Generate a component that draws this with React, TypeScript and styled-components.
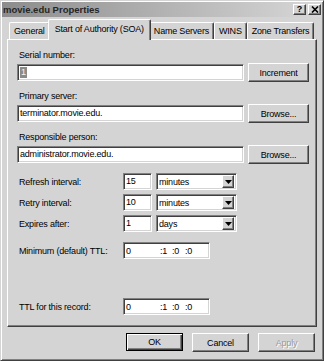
import React from "react";
import styled, { createGlobalStyle } from "styled-components";

const face = "#d4d4d4";
const shadow = "#808080";
const darkShadow = "#404040";
const highlight = "#ffffff";

const GlobalStyle = createGlobalStyle`
  html, body {
    margin: 0;
    padding: 0;
    background: ${face};
  }
  body {
    font-family: "Liberation Sans", Arial, sans-serif;
    font-size: 9px;
    letter-spacing: -0.2px;
    color: #000;
  }
  * {
    box-sizing: border-box;
  }
`;

const Window = styled.div`
  width: 324px;
  height: 361px;
  display: flex;
  flex-direction: column;
  background: ${face};
  border-top: 1px solid ${face};
  border-left: 1px solid ${face};
  border-right: 1px solid ${darkShadow};
  border-bottom: 1px solid ${darkShadow};
  box-shadow: inset 1px 1px ${highlight}, inset -1px -1px ${shadow};
  padding: 1px;
`;

const TitleBar = styled.div`
  height: 15px;
  display: flex;
  align-items: center;
  justify-content: space-between;
  padding: 0 1px 0 1px;
  background: linear-gradient(to right, #8c8c8c, #d8d8d8);
`;

const Title = styled.div`
  font-weight: bold;
  font-size: 9.5px;
  letter-spacing: 0;
  color: #262626;
`;

const CaptionButtons = styled.div`
  display: flex;
  gap: 2px;
`;

const CaptionButton = styled.div`
  width: 13px;
  height: 11px;
  display: flex;
  align-items: center;
  justify-content: center;
  background: ${face};
  border-top: 1px solid ${highlight};
  border-left: 1px solid ${highlight};
  border-right: 1px solid ${darkShadow};
  border-bottom: 1px solid ${darkShadow};
  box-shadow: inset -1px -1px ${shadow};
  font-weight: bold;
  font-size: 9px;
  line-height: 9px;
  letter-spacing: 0;
`;

const Body = styled.div`
  flex: 1;
  display: flex;
  flex-direction: column;
  padding: 0 5px 0 5px;
`;

const TabStrip = styled.div`
  height: 22px;
  display: flex;
  align-items: flex-end;
  padding-left: 2px;
`;

const Tab = styled.div<{ $active?: boolean }>`
  position: relative;
  z-index: ${(p) => (p.$active ? 2 : 1)};
  height: ${(p) => (p.$active ? "21px" : "17px")};
  margin: ${(p) => (p.$active ? "0 -2px -1px" : "0")};
  padding: ${(p) => (p.$active ? "0 6px 2px" : "0 4px")};
  display: flex;
  align-items: center;
  background: ${face};
  border-top: 1px solid ${highlight};
  border-left: 1px solid ${highlight};
  border-right: 1px solid ${darkShadow};
  border-radius: 2px 2px 0 0;
  box-shadow: inset -1px 0 ${shadow};
  white-space: nowrap;
`;

const Panel = styled.div`
  flex: 1;
  display: flex;
  flex-direction: column;
  padding: 10px 7px 11px 9px;
  border-top: 1px solid ${highlight};
  border-left: 1px solid ${highlight};
  border-right: 1px solid ${darkShadow};
  border-bottom: 1px solid ${darkShadow};
  box-shadow: inset -1px -1px ${shadow};
`;

const Group = styled.div`
  margin-bottom: 9px;
`;

const FieldLabel = styled.div`
  height: 11px;
  line-height: 11px;
  padding-left: 2px;
  margin-bottom: 2px;
`;

const FieldRow = styled.div`
  height: 19px;
  display: flex;
  align-items: center;
  gap: 4px;
`;

const Sunken = styled.div`
  height: 17px;
  background: #fff;
  border-top: 1px solid ${shadow};
  border-left: 1px solid ${shadow};
  border-right: 1px solid ${highlight};
  border-bottom: 1px solid ${highlight};
  box-shadow: inset 1px 1px ${darkShadow}, inset -1px -1px ${face};
  white-space: nowrap;
  overflow: hidden;
`;

const TextField = styled(Sunken)<{ $width?: number }>`
  flex: ${(p) => (p.$width ? "none" : "1")};
  width: ${(p) => (p.$width ? `${p.$width}px` : "auto")};
  padding: 0 2px;
  line-height: 15px;
`;

const Selected = styled.span`
  display: inline-block;
  background: #8a8a8a;
  color: #f4f4f4;
  padding: 0 1px;
  line-height: 11px;
  vertical-align: middle;
`;

const PushButton = styled.div<{ $width?: number; $default?: boolean; $disabled?: boolean }>`
  width: ${(p) => p.$width ?? 61}px;
  height: ${(p) => (p.$default ? 18 : 19)}px;
  display: flex;
  align-items: center;
  justify-content: center;
  background: ${face};
  border: 1px solid ${(p) => (p.$default ? "#000" : "transparent")};
  border-top-color: ${(p) => (p.$default ? "#000" : highlight)};
  border-left-color: ${(p) => (p.$default ? "#000" : highlight)};
  border-right-color: ${(p) => (p.$default ? "#000" : darkShadow)};
  border-bottom-color: ${(p) => (p.$default ? "#000" : darkShadow)};
  box-shadow: ${(p) =>
    p.$default
      ? `inset 1px 1px ${highlight}, inset -1px -1px ${darkShadow}, inset -2px -2px ${shadow}`
      : `inset -1px -1px ${shadow}`};
  color: ${(p) => (p.$disabled ? "#9a9a9a" : "#000")};
  text-shadow: ${(p) => (p.$disabled ? `1px 1px ${highlight}` : "none")};
`;

const IntervalRow = styled.div`
  height: 17px;
  display: flex;
  align-items: center;
  margin-bottom: 4px;
`;

const RowLabel = styled.div`
  width: 106px;
  padding-left: 2px;
`;

const SelectBox = styled(Sunken)`
  width: 81px;
  margin-left: 4px;
  display: flex;
  align-items: center;
  padding: 0 2px 0 2px;
`;

const SelectText = styled.div`
  flex: 1;
`;

const SelectArrow = styled.div`
  width: 12px;
  height: 13px;
  display: flex;
  align-items: center;
  justify-content: center;
  background: ${face};
  border-top: 1px solid ${highlight};
  border-left: 1px solid ${highlight};
  border-right: 1px solid ${darkShadow};
  border-bottom: 1px solid ${darkShadow};
  box-shadow: inset -1px -1px ${shadow};
`;

const TtlRow = styled.div<{ $top?: number }>`
  height: 17px;
  display: flex;
  align-items: center;
  margin-top: ${(p) => p.$top ?? 0}px;
`;

const TtlField = styled(Sunken)`
  width: 87px;
  display: flex;
  align-items: center;
  padding: 0 2px;
`;

const TtlPart = styled.span<{ $w: number }>`
  width: ${(p) => p.$w}px;
`;

const Spacer = styled.div`
  flex: 1;
`;

const Footer = styled.div`
  display: flex;
  justify-content: flex-end;
  gap: 9px;
  padding: 6px 7px 7px 0;
`;

const intervals = [
  { label: "Refresh interval:", value: "15", unit: "minutes" },
  { label: "Retry interval:", value: "10", unit: "minutes" },
  { label: "Expires after:", value: "1", unit: "days" },
];

const tabs = ["General", "Start of Authority (SOA)", "Name Servers", "WINS", "Zone Transfers"];

const DownArrow = () => (
  <svg width="7" height="4" viewBox="0 0 7 4">
    <path d="M0 0h7L3.5 4z" fill="#000" />
  </svg>
);

const CloseGlyph = () => (
  <svg width="8" height="7" viewBox="0 0 8 7">
    <path d="M1 0.5l6 6M7 0.5l-6 6" stroke="#000" strokeWidth="1.6" />
  </svg>
);

const TtlValue = () => (
  <TtlField>
    <TtlPart $w={34}>0</TtlPart>
    <TtlPart $w={12}>:1</TtlPart>
    <TtlPart $w={13}>:0</TtlPart>
    <TtlPart $w={10}>:0</TtlPart>
  </TtlField>
);

const App: React.FC = () => {
  return (
    <>
      <GlobalStyle />
      <Window>
        <TitleBar>
          <Title>movie.edu Properties</Title>
          <CaptionButtons>
            <CaptionButton>?</CaptionButton>
            <CaptionButton>
              <CloseGlyph />
            </CaptionButton>
          </CaptionButtons>
        </TitleBar>

        <Body>
          <TabStrip>
            {tabs.map((t, i) => (
              <Tab key={t} $active={i === 1}>
                {t}
              </Tab>
            ))}
          </TabStrip>

          <Panel>
            <Group>
              <FieldLabel>Serial number:</FieldLabel>
              <FieldRow>
                <TextField>
                  <Selected>1</Selected>
                </TextField>
                <PushButton>Increment</PushButton>
              </FieldRow>
            </Group>
            <Group>
              <FieldLabel>Primary server:</FieldLabel>
              <FieldRow>
                <TextField>terminator.movie.edu.</TextField>
                <PushButton>Browse...</PushButton>
              </FieldRow>
            </Group>
            <Group>
              <FieldLabel>Responsible person:</FieldLabel>
              <FieldRow>
                <TextField>administrator.movie.edu.</TextField>
                <PushButton>Browse...</PushButton>
              </FieldRow>
            </Group>

            {intervals.map((row) => (
              <IntervalRow key={row.label}>
                <RowLabel>{row.label}</RowLabel>
                <TextField $width={29}>{row.value}</TextField>
                <SelectBox>
                  <SelectText>{row.unit}</SelectText>
                  <SelectArrow>
                    <DownArrow />
                  </SelectArrow>
                </SelectBox>
              </IntervalRow>
            ))}

            <TtlRow $top={6}>
              <RowLabel>Minimum (default) TTL:</RowLabel>
              <TtlValue />
            </TtlRow>

            <Spacer />

            <TtlRow>
              <RowLabel>TTL for this record:</RowLabel>
              <TtlValue />
            </TtlRow>
          </Panel>
        </Body>

        <Footer>
          <PushButton $width={57} $default>
            OK
          </PushButton>
          <PushButton $width={57}>Cancel</PushButton>
          <PushButton $width={57} $disabled>
            Apply
          </PushButton>
        </Footer>
      </Window>
    </>
  );
};

export default App;
